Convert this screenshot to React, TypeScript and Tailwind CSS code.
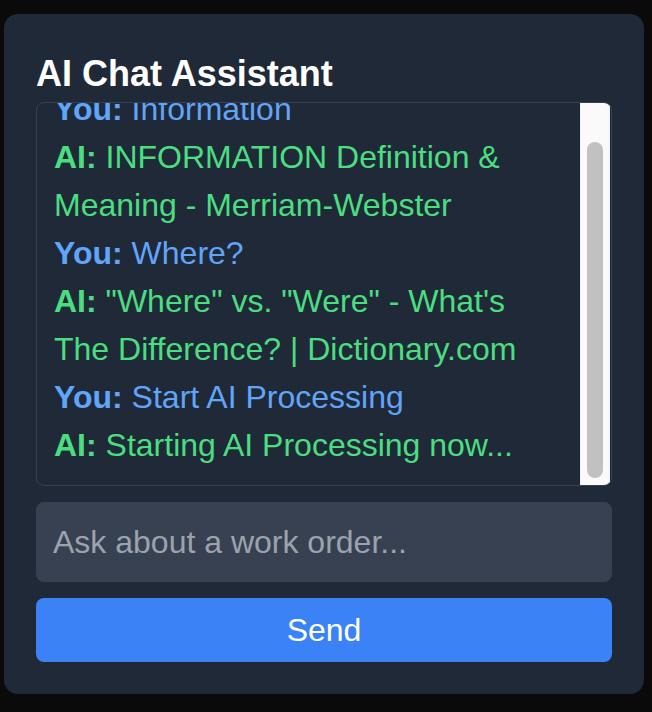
import { useEffect, useRef, useState } from "react";

interface Message {
  sender: "user" | "ai";
  text: string;
}

const initialMessages: Message[] = [
  { sender: "user", text: "Information" },
  { sender: "ai", text: "INFORMATION Definition & Meaning - Merriam-Webster" },
  { sender: "user", text: "Where?" },
  { sender: "ai", text: "\"Where\" vs. \"Were\" - What's The Difference? | Dictionary.com" },
  { sender: "user", text: "Start AI Processing" },
  { sender: "ai", text: "Starting AI Processing now..." },
];

export default function App() {
  const [messages] = useState<Message[]>(initialMessages);
  const [input, setInput] = useState("");
  const chatRef = useRef<HTMLDivElement>(null);

  // keep the log pinned to the newest message
  useEffect(() => {
    if (chatRef.current) {
      chatRef.current.scrollTop = chatRef.current.scrollHeight;
    }
  }, [messages]);

  return (
    <div className="min-h-screen bg-[#0a0a0a] pt-[14px] pl-[4px] font-['Liberation_Sans',Arial,sans-serif]">
      <div className="w-[640px] rounded-[14px] bg-[#1f2937] p-[32px]">
        <h2 className="text-[36px] font-bold leading-[56px] text-white">
          AI Chat Assistant
        </h2>

        <div className="flex h-[384px] overflow-hidden rounded-[8px] border border-[#374151] pr-[1px]">
          <div
            ref={chatRef}
            className="min-w-0 flex-1 overflow-y-auto py-[16px] pr-[15px] pl-[17px] [scrollbar-width:none]"
          >
            {messages.map((msg, index) => (
              <div
                key={index}
                className={`text-[32px] leading-[48px] ${
                  msg.sender === "user" ? "text-[#60a5fa]" : "text-[#4ade80]"
                }`}
              >
                <strong className="font-bold">
                  {msg.sender === "user" ? "You:" : "AI:"}
                </strong>{" "}
                {msg.text}
              </div>
            ))}
          </div>
          {/* scrollbar track, drawn as in the desktop capture */}
          <div className="flex w-[30px] shrink-0 flex-col border-x border-[#efefef] bg-[#fafafa] px-[6px] pt-[39px] pb-[7px]">
            <div className="flex-1 rounded-full bg-[#c1c1c1]" />
          </div>
        </div>

        <input
          type="text"
          value={input}
          onChange={(e) => setInput(e.target.value)}
          placeholder="Ask about a work order..."
          className="mt-[16px] block h-[80px] w-full rounded-[8px] bg-[#374151] pr-[16px] pl-[17px] text-[32px] text-white outline-none placeholder:text-[#9ca3af]"
        />

        <button
          onClick={() => setInput("")}
          className="mt-[16px] block h-[64px] w-full rounded-[8px] bg-[#3b82f6] text-[32px] text-white"
        >
          Send
        </button>
      </div>
    </div>
  );
}
